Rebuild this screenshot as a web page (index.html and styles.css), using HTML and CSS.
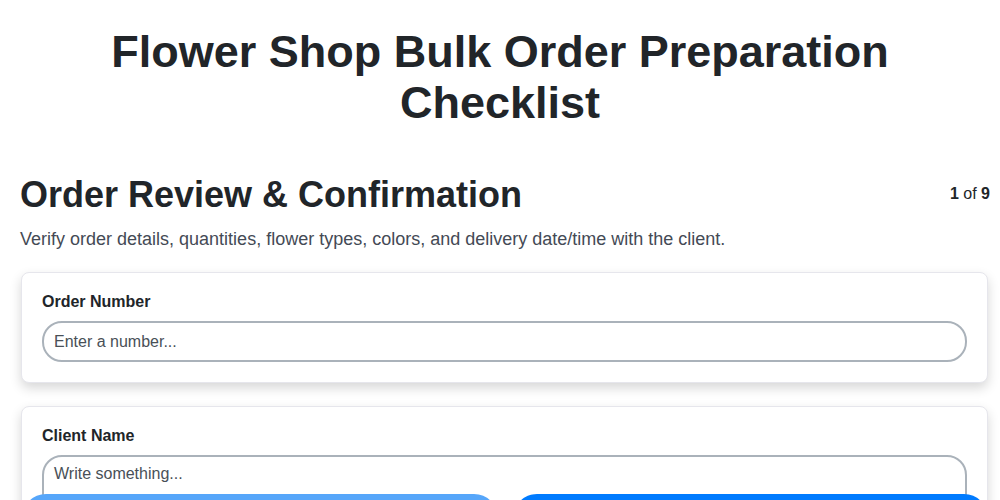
FILE: index.html
```html
<!DOCTYPE html>
<html lang="en">
<head>
<meta charset="utf-8">
<title>Flower Shop Bulk Order Preparation Checklist</title>
<link rel="stylesheet" href="styles.css">
</head>
<body>
<main class="page">
  <h1 class="title">Flower Shop Bulk Order Preparation Checklist</h1>
  <section class="step">
    <div class="step-head">
      <h2 class="step-title">Order Review &amp; Confirmation</h2>
      <div class="step-count"><b>1</b> of <b>9</b></div>
    </div>
    <p class="step-desc">Verify order details, quantities, flower types, colors, and delivery date/time with the client.</p>
    <div class="card">
      <label class="field-label" for="order">Order Number</label>
      <input class="field-input" id="order" type="text" placeholder="Enter a number...">
    </div>
    <div class="card">
      <label class="field-label" for="client">Client Name</label>
      <textarea class="field-input field-area" id="client" placeholder="Write something..."></textarea>
    </div>
  </section>
</main>
<nav class="nav-bar">
  <button class="nav-btn nav-prev" type="button">Previous</button>
  <button class="nav-btn nav-next" type="button">Next</button>
</nav>
</body>
</html>
```
FILE: styles.css
```css
* { box-sizing: border-box; }
html, body { margin: 0; padding: 0; background: #fff; }
body {
  font-family: "Liberation Sans", Arial, sans-serif;
  color: #212529;
  overflow: hidden;
}
.page {
  padding: 26px 10px 80px 20px;
}
.title {
  margin: 0 0 45px;
  text-align: center;
  font-size: 45px;
  line-height: 51px;
  font-weight: 700;
  padding: 0 80px 0 70px;
}
.step-head {
  display: flex;
  justify-content: space-between;
  align-items: flex-start;
}
.step-title {
  margin: 0;
  font-size: 36px;
  line-height: 44px;
  font-weight: 700;
}
.step-count {
  font-size: 16px;
  padding-top: 12px;
}
.step-desc {
  margin: 10px 0 21px;
  font-size: 18px;
  line-height: 24px;
  color: #444a55;
}
.card {
  margin: 0 2px 23px 1px;
  padding: 20px;
  background: #fff;
  border: 1px solid #e6e6ec;
  border-radius: 8px;
  box-shadow: 0 5px 12px rgba(0, 0, 0, 0.16);
}
.field-label {
  display: block;
  font-size: 16px;
  line-height: 18px;
  font-weight: 700;
  margin-bottom: 10px;
}
.field-input {
  display: block;
  width: 100%;
  height: 41px;
  padding: 0 10px;
  font-family: inherit;
  font-size: 16px;
  color: #495057;
  border: 2px solid #aab2ba;
  border-radius: 20px;
  background: #fff;
  outline: none;
}
.field-input::placeholder { color: #495057; opacity: 1; }
.field-area {
  height: 90px;
  padding-top: 8px;
  resize: none;
}
.nav-bar {
  position: fixed;
  left: 22px;
  right: 12px;
  top: 494px;
  display: flex;
  gap: 15px;
}
.nav-btn {
  flex: 1;
  height: 48px;
  border: none;
  border-radius: 24px;
  color: #fff;
  font-family: inherit;
  font-size: 16px;
}
.nav-prev { background: #56a6fa; }
.nav-next { background: #007bff; }
```
